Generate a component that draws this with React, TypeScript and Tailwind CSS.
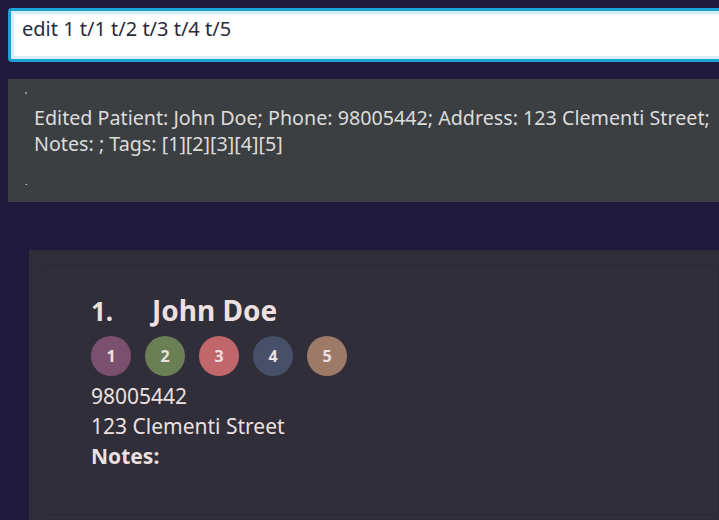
import React from 'react';

const tags = [
  { label: '1', color: 'bg-[#7b506f]' },
  { label: '2', color: 'bg-[#6b7f55]' },
  { label: '3', color: 'bg-[#c1666b]' },
  { label: '4', color: 'bg-[#485069]' },
  { label: '5', color: 'bg-[#9d7a68]' },
];

export default function App() {
  return (
    <div
      className="h-[520px] w-[719px] overflow-hidden bg-[#201b3c] font-['Noto_Sans',sans-serif]"
    >
      {/* command box */}
      <div className="pl-2 pt-2">
        <div className="flex h-[54px] w-[760px] items-start rounded-[4px] border-[3px] border-[#1aa3d9] bg-white px-[11px] pt-[4px] shadow-[inset_0_0_0_3px_#d6eef9]">
          <span className="text-[20px] leading-[28px] text-[#2a2a3a]">edit 1 t/1 t/2 t/3 t/4 t/5</span>
        </div>
      </div>

      {/* result display */}
      <div className="ml-2 mt-[17px] h-[123px] w-[760px] bg-[#3c3f41] pl-[17px] pt-[14px] text-[19.7px] leading-[26px] text-[#dcdcdc]">
        <div className="h-[12px] text-[9px] leading-[6px] text-white">'</div>
        <div className="whitespace-nowrap pl-[9px]">Edited Patient: John Doe; Phone: 98005442; Address: 123 Clementi Street;</div>
        <div className="pl-[9px]">Notes: ; Tags: [1][2][3][4][5]</div>
        <div className="mt-[22px] text-[9px] leading-[6px] text-white">.</div>
      </div>

      {/* patient list */}
      <div className="ml-[29px] mt-[48px] h-[300px] bg-[#2e2d38] pl-[16px] pt-[15px]">
        <div className="h-[250px] border border-[#2b2a34] bg-[#2f2e39] pl-[45px] pt-[26px] text-[#ece0e0]">
          <div className="flex items-baseline font-bold leading-[36px]">
            <span className="w-[61px] text-[26px]">1.</span>
            <span className="text-[28px]">John Doe</span>
          </div>
          <div className="mt-[7px] flex gap-[14px]">
            {tags.map((t) => (
              <div
                key={t.label}
                className={`flex h-[40px] w-[40px] items-center justify-center rounded-full text-[16px] font-bold ${t.color}`}
              >
                {t.label}
              </div>
            ))}
          </div>
          <div className="mt-[5px] text-[21px] leading-[30px]">98005442</div>
          <div className="text-[21px] leading-[30px]">123 Clementi Street</div>
          <div className="text-[21px] font-bold leading-[31px]">Notes:</div>
        </div>
      </div>
    </div>
  );
}
